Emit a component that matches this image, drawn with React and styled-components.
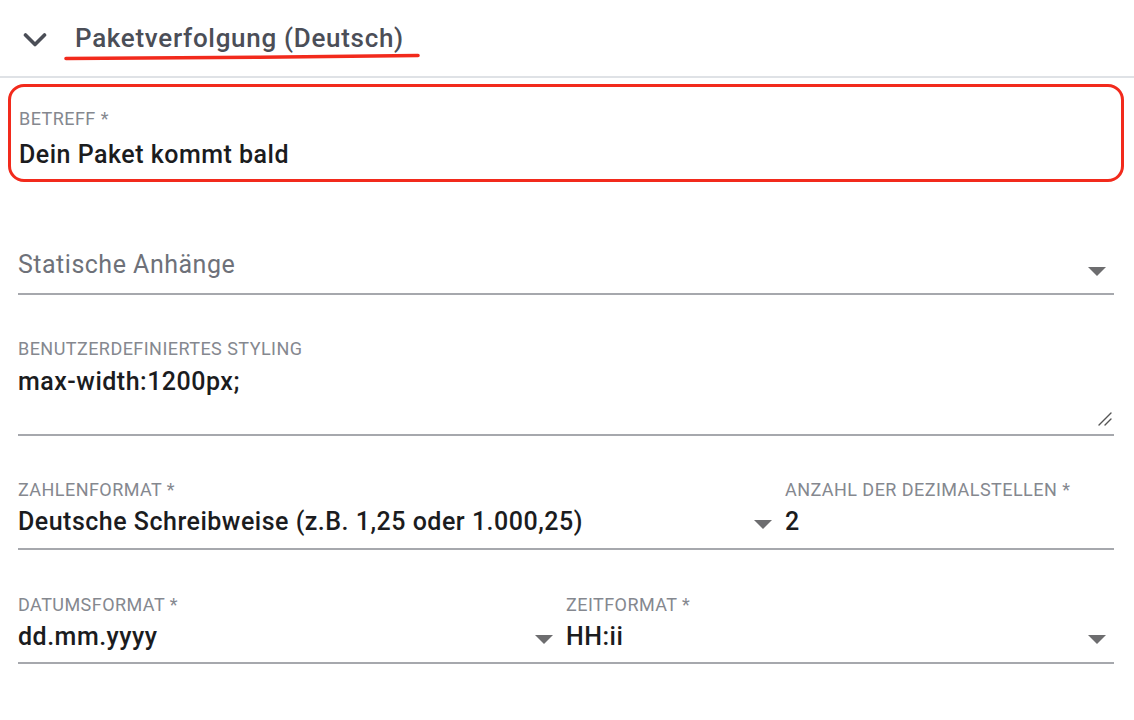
import React from "react";
import styled, { createGlobalStyle } from "styled-components";

const GlobalStyle = createGlobalStyle`
  html, body {
    margin: 0;
    padding: 0;
    background: #ffffff;
  }
  body {
    font-family: Roboto, "Liberation Sans", Arial, sans-serif;
    -webkit-font-smoothing: antialiased;
  }
`;

const Page = styled.div`
  width: 1134px;
  min-height: 720px;
  background: #ffffff;
`;

const Header = styled.div`
  height: 78px;
  display: flex;
  align-items: center;
  padding-left: 23px;
  box-sizing: border-box;
  border-bottom: 2px solid #dfe2e6;
`;

const Chevron = styled.svg`
  width: 24px;
  height: 16px;
  margin-top: 4px;
  flex-shrink: 0;
`;

const TitleWrap = styled.div`
  position: relative;
  margin-left: 28px;
`;

const Title = styled.h2`
  margin: 0;
  font-size: 26px;
  line-height: 28px;
  font-weight: 500;
  color: #4b4e57;
  letter-spacing: 0.7px;
`;

const Scribble = styled.svg`
  position: absolute;
  left: -11px;
  top: 28px;
  width: 360px;
  height: 10px;
  overflow: visible;
`;

const Form = styled.div`
  display: flex;
  flex-direction: column;
  padding: 0 20px 0 18px;
`;

const Highlight = styled.div`
  margin: 6px -10px 0 -10px;
  border: 3px solid #f22a1c;
  border-radius: 16px;
  padding: 22px 11px 10px 8px;
`;

const Row = styled.div`
  display: grid;
  grid-template-columns: ${(p) => p.$cols || "1fr"};
  margin-top: ${(p) => p.$top || 0}px;
  padding-bottom: ${(p) => p.$bottom || 0}px;
  border-bottom: 2px solid #a6a8ad;
  position: relative;
`;

const Cell = styled.div`
  display: flex;
  flex-direction: column;
  padding-right: ${(p) => p.$right || 0}px;
  min-width: 0;
`;

const Label = styled.div`
  font-size: 18px;
  line-height: 20px;
  font-weight: 400;
  color: #85888f;
  text-transform: uppercase;
  letter-spacing: 0.45px;
`;

const ValueLine = styled.div`
  display: flex;
  align-items: flex-end;
  justify-content: space-between;
  margin-top: ${(p) => p.$gap || 0}px;
`;

const Value = styled.div`
  font-size: 25px;
  line-height: 28px;
  letter-spacing: 0.5px;
  color: ${(p) => (p.$placeholder ? "#6e7179" : "#1b1c1e")};
  font-weight: ${(p) => (p.$placeholder ? 400 : 500)};
  white-space: nowrap;
`;

const Caret = styled.span`
  width: 0;
  height: 0;
  border-left: 9px solid transparent;
  border-right: 9px solid transparent;
  border-top: 9px solid #6d6d6f;
  margin-bottom: ${(p) => p.$bottom || 6}px;
  flex-shrink: 0;
`;

const Resize = styled.svg`
  position: absolute;
  right: 2px;
  bottom: 8px;
  width: 14px;
  height: 14px;
`;

function Select({ label, value, placeholder, right, caretBottom }) {
  return (
    <Cell $right={right}>
      {label && <Label>{label}</Label>}
      <ValueLine $gap={label ? 8 : 0}>
        <Value $placeholder={placeholder}>{value}</Value>
        <Caret $bottom={caretBottom} />
      </ValueLine>
    </Cell>
  );
}

export default function App() {
  return (
    <Page>
      <GlobalStyle />
      <Header>
        <Chevron viewBox="0 0 24 16">
          <path
            d="M2.5 3 L12 12.5 L21.5 3"
            fill="none"
            stroke="#4b4e57"
            strokeWidth="3.6"
            strokeLinecap="round"
            strokeLinejoin="round"
          />
        </Chevron>
        <TitleWrap>
          <Title>Paketverfolgung (Deutsch)</Title>
          <Scribble viewBox="0 0 360 10">
            <path
              d="M2 6.5 C 90 6, 250 5, 354 3.5"
              fill="none"
              stroke="#f22a1c"
              strokeWidth="3.6"
              strokeLinecap="round"
            />
          </Scribble>
        </TitleWrap>
      </Header>

      <Form>
        <Highlight>
          <Label>Betreff *</Label>
          <ValueLine $gap={12}>
            <Value>Dein Paket kommt bald</Value>
          </ValueLine>
        </Highlight>

        <Row $top={69} $bottom={14}>
          <Select
            value="Statische Anhänge"
            placeholder
            right={8}
            caretBottom={3}
          />
        </Row>

        <Row $top={44} $bottom={38}>
          <Cell>
            <Label>Benutzerdefiniertes Styling</Label>
            <ValueLine $gap={9}>
              <Value>max-width:1200px;</Value>
            </ValueLine>
          </Cell>
          <Resize viewBox="0 0 14 14">
            <path
              d="M1 13 L13 1 M7 13 L13 7"
              stroke="#555"
              strokeWidth="1.4"
              strokeLinecap="round"
            />
          </Resize>
        </Row>

        <Row $top={44} $bottom={12} $cols="767px 1fr">
          <Select
            label="Zahlenformat *"
            value="Deutsche Schreibweise (z.B. 1,25 oder 1.000,25)"
            right={13}
            caretBottom={7}
          />
          <Cell>
            <Label>Anzahl der Dezimalstellen *</Label>
            <ValueLine $gap={8}>
              <Value>2</Value>
            </ValueLine>
          </Cell>
        </Row>

        <Row $top={45} $bottom={11} $cols="548px 1fr">
          <Select
            label="Datumsformat *"
            value="dd.mm.yyyy"
            right={13}
            caretBottom={7}
          />
          <Select
            label="Zeitformat *"
            value="HH:ii"
            right={8}
            caretBottom={7}
          />
        </Row>
      </Form>
    </Page>
  );
}
